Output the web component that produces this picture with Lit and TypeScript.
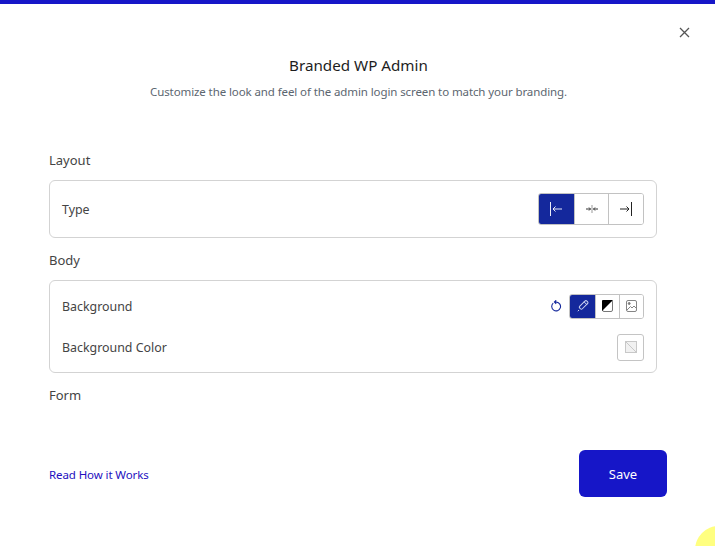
import { LitElement, html, css, svg } from "lit";
import { customElement } from "lit/decorators.js";

const closeIcon = svg`<path d="M1 2l9 9M10 2l-9 9" stroke="#555" stroke-width="1.3" fill="none"/>`;

@customElement("app-root")
export class AppRoot extends LitElement {
  static styles = css`
    :host {
      display: block;
      position: relative;
      width: 715px;
      height: 546px;
      overflow: hidden;
      background: #fff;
      font-family: "Noto Sans", sans-serif;
      color: #333;
      font-size: 12px;
    }
    .modal {
      display: flex;
      flex-direction: column;
      height: 100%;
      box-sizing: border-box;
      border-top: 4px solid #1616c8;
    }
    .close {
      position: absolute;
      top: 26px;
      right: 24px;
      width: 13px;
      height: 13px;
      transform: translateX(1px);
    }
    .header {
      display: flex;
      flex-direction: column;
      align-items: center;
      padding: 51px 0 0 2px;
      gap: 8px;
    }
    .title {
      margin: 0;
      font-size: 15.2px;
      font-weight: 400;
      line-height: 20px;
      color: #1d1d1d;
    }
    .subtitle {
      margin: 0;
      font-size: 11.5px;
      letter-spacing: -0.1px;
      line-height: 17px;
      color: #5c6670;
    }
    .sections {
      display: flex;
      flex-direction: column;
      padding: 50px 58px 0 49px;
    }
    .label {
      font-size: 13px;
      line-height: 20px;
      color: #444;
      margin-bottom: 10px;
    }
    .card {
      border: 1px solid #d3d3d3;
      border-radius: 6px;
      padding: 9px 12px;
      margin-bottom: 12px;
      display: flex;
      flex-direction: column;
      gap: 9px;
    }
    .card.single {
      padding: 12px;
    }
    .row {
      display: flex;
      align-items: center;
      justify-content: space-between;
      min-height: 32px;
    }
    .row-label {
      font-size: 12.4px;
      color: #444;
    }
    .controls {
      display: flex;
      align-items: center;
      gap: 7px;
    }
    .group {
      display: flex;
      border: 1px solid #c2c2c2;
      border-radius: 3px;
      overflow: hidden;
    }
    .group button {
      display: flex;
      align-items: center;
      justify-content: center;
      border: 0;
      border-left: 1px solid #c2c2c2;
      background: #fff;
      padding: 0;
      margin: 0;
    }
    .group button:first-child {
      border-left: 0;
    }
    .group button.active {
      background: #14289c;
    }
    .group.large button {
      width: 34px;
      height: 30px;
    }
    .group.large button:first-child,
    .group.large button:last-child {
      width: 35px;
    }
    .group.small button {
      width: 24px;
      height: 23px;
    }
    .group.small button:first-child {
      width: 25px;
    }
    .swatch {
      display: flex;
      align-items: center;
      justify-content: center;
      width: 27px;
      height: 27px;
      border: 1px solid #c4c4c4;
      border-radius: 3px;
      box-sizing: border-box;
    }
    .footer {
      display: flex;
      justify-content: space-between;
      align-items: center;
      margin-top: auto;
      padding: 0 48px 49px 49px;
    }
    .link {
      color: #2410c0;
      font-size: 11.5px;
      letter-spacing: -0.1px;
      text-decoration: none;
      padding-top: 1px;
    }
    .save {
      width: 88px;
      height: 47px;
      border: 0;
      border-radius: 6px;
      background: #1616c8;
      color: #fff;
      font: 400 13px "Noto Sans", sans-serif;
    }
    .blob {
      position: absolute;
      left: 695px;
      top: 526px;
      width: 48px;
      height: 48px;
      border-radius: 50%;
      background: #ffff80;
    }
  `;

  render() {
    return html`
      <div class="modal">
        <svg class="close" viewBox="0 0 13 13">${closeIcon}</svg>
        <div class="header">
          <h1 class="title">Branded WP Admin</h1>
          <p class="subtitle">Customize the look and feel of the admin login screen to match your branding.</p>
        </div>
        <div class="sections">
          <div class="label">Layout</div>
          <div class="card single">
            <div class="row">
              <span class="row-label">Type</span>
              <div class="group large">
                <button class="active">
                  <svg width="14" height="14" viewBox="0 0 14 14" fill="none" stroke="#e8ebf7" stroke-width="1">
                    <path d="M.5 0v14M12 7H3M5.5 4.5L3 7l2.5 2.5" />
                  </svg>
                </button>
                <button>
                  <svg width="12" height="8" viewBox="0 0 12 8" fill="none" stroke="#333" stroke-width="1">
                    <path d="M6 0v8" stroke="#999" />
                    <path d="M0 4h4.5M3 2.5L4.5 4 3 5.5M12 4H7.5M9 2.5L7.5 4 9 5.5" />
                  </svg>
                </button>
                <button>
                  <svg width="14" height="14" viewBox="0 0 14 14" fill="none" stroke="#222" stroke-width="1">
                    <path d="M12.5 0v14M1 7h9M7.5 4.5L10 7 7.5 9.5" />
                  </svg>
                </button>
              </div>
            </div>
          </div>
          <div class="label">Body</div>
          <div class="card">
            <div class="row">
              <span class="row-label">Background</span>
              <div class="controls">
                <svg width="11" height="12" viewBox="0 0 11 12" fill="none" stroke="#14289c" stroke-width="1.1">
                  <path d="M2.2 3.2A4.4 4.4 0 1 0 5.5 2.1H3.6M5.2 .3L3.4 2.1l1.8 1.8" />
                </svg>
                <div class="group small">
                  <button class="active">
                    <svg width="12" height="12" viewBox="0 0 12 12" fill="none" stroke="#ccd3f0" stroke-width="1">
                      <rect x="4.6" y="-.5" width="3.6" height="10" rx="1.4" transform="rotate(45 6 5)" />
                      <path d="M2 10L.8 11.2M7 1.8l3.2 3.2" />
                    </svg>
                  </button>
                  <button>
                    <svg width="11" height="12" viewBox="0 0 11 12">
                      <rect x=".5" y=".5" width="10" height="11" rx="1.5" fill="#fff" stroke="#777" />
                      <path d="M0 11V1a1 1 0 0 1 1-1h10z" fill="#000" />
                    </svg>
                  </button>
                  <button>
                    <svg width="11" height="12" viewBox="0 0 11 12" fill="none" stroke="#777" stroke-width=".9">
                      <rect x=".5" y=".5" width="10" height="11" rx="1.5" />
                      <circle cx="3.2" cy="3.5" r="1" fill="#777" />
                      <path d="M1 10l3.5-3.5L6 8l2-2 2 2" />
                    </svg>
                  </button>
                </div>
              </div>
            </div>
            <div class="row">
              <span class="row-label">Background Color</span>
              <div class="swatch">
                <svg width="12" height="12" viewBox="0 0 12 12" fill="#f1f1f1" stroke="#c8c8c8">
                  <rect x=".5" y=".5" width="11" height="11" />
                  <path d="M1 1l10 10" />
                </svg>
              </div>
            </div>
          </div>
          <div class="label">Form</div>
        </div>
        <div class="footer">
          <a class="link" href="#">Read How it Works</a>
          <button class="save">Save</button>
        </div>
      </div>
      <div class="blob"></div>
    `;
  }
}
